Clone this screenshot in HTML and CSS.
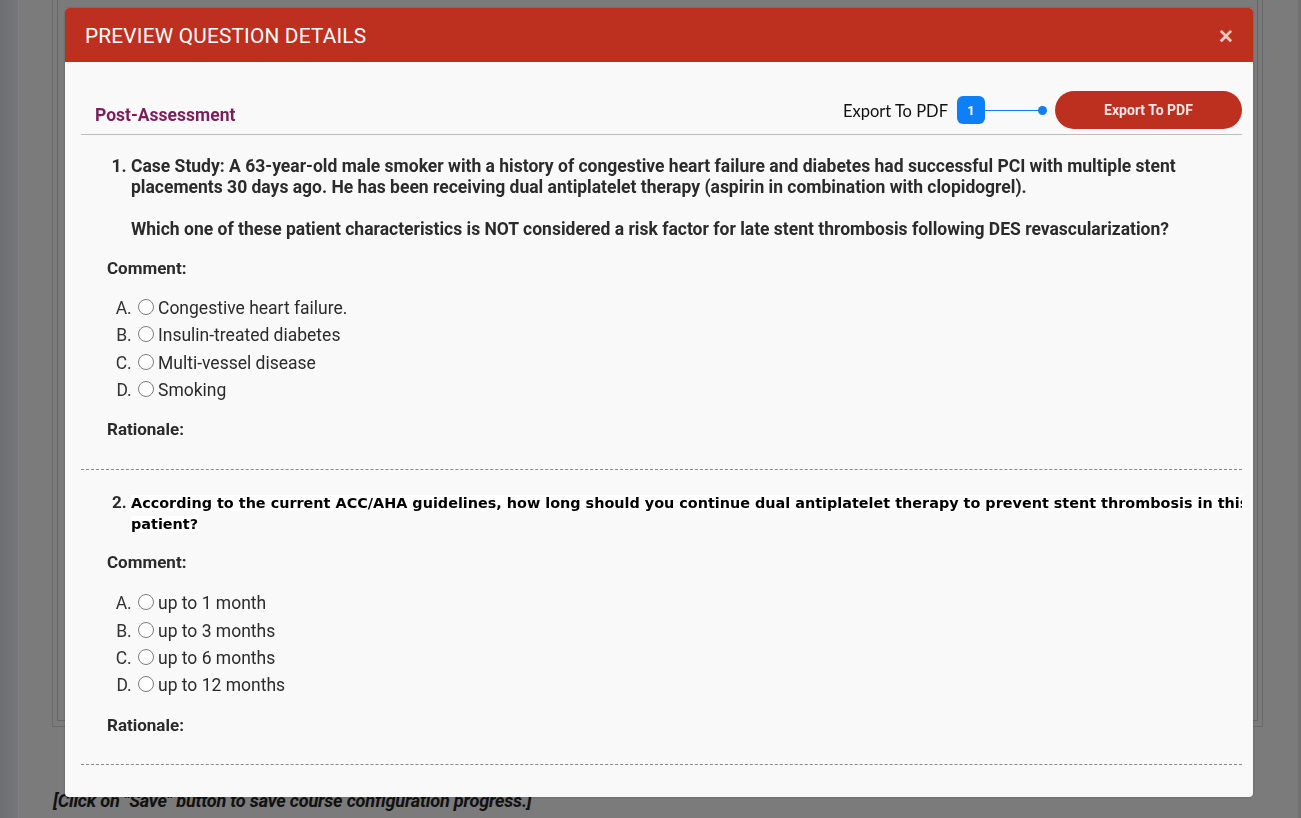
FILE: index.html
```html
<!DOCTYPE html>
<html>
<head>
<meta charset="utf-8">
<link rel="stylesheet" href="styles.css">
</head>
<body>
<div class="page">
  <div class="side"></div>
  <div class="main">
    <div class="outer-panel">
      <div class="inner-panel"></div>
    </div>
    <p class="save-note">[Click on "Save" button to save course configuration progress.]</p>
  </div>
  <div class="right-edge"></div>
</div>

<div class="modal">
  <div class="modal-header">
    <h2 class="modal-title">PREVIEW QUESTION DETAILS</h2>
    <span class="modal-close">&#x2715;</span>
  </div>
  <div class="modal-body">
    <div class="toolbar">
      <div class="section-title">Post-Assessment</div>
      <div class="export-wrap">
        <span class="export-label">Export To PDF</span>
        <span class="badge">1</span>
        <span class="connector"><span class="dot"></span></span>
        <button class="btn-export">Export To PDF</button>
      </div>
    </div>

    <div class="question">
      <ol class="q-list" start="1">
        <li class="q-text">Case Study: A 63-year-old male smoker with a history of congestive heart failure and diabetes had successful PCI with multiple stent placements 30 days ago. He has been receiving dual antiplatelet therapy (aspirin in combination with clopidogrel).<br><br>Which one of these patient characteristics is NOT considered a risk factor for late stent thrombosis following DES revascularization?</li>
      </ol>
      <div class="label">Comment:</div>
      <ol class="opts">
        <li><span class="radio"></span>Congestive heart failure.</li>
        <li><span class="radio"></span>Insulin-treated diabetes</li>
        <li><span class="radio"></span>Multi-vessel disease</li>
        <li><span class="radio"></span>Smoking</li>
      </ol>
      <div class="label rationale">Rationale:</div>
    </div>

    <div class="question second">
      <ol class="q-list" start="2">
        <li class="q-text q-alt"><span class="hl">According to the current ACC/AHA guidelines, how long should you continue dual antiplatelet therapy to prevent stent thrombosis in this patient?</span></li>
      </ol>
      <div class="label">Comment:</div>
      <ol class="opts">
        <li><span class="radio"></span>up to 1 month</li>
        <li><span class="radio"></span>up to 3 months</li>
        <li><span class="radio"></span>up to 6 months</li>
        <li><span class="radio"></span>up to 12 months</li>
      </ol>
      <div class="label rationale">Rationale:</div>
    </div>
  </div>
</div>
</body>
</html>
```

FILE: styles.css
```css
html, body {
  margin: 0;
  padding: 0;
  height: 100%;
  overflow: hidden;
}
body {
  font-family: Roboto, "Liberation Sans", sans-serif;
  background: #7b7b7b;
}
.page {
  display: flex;
  height: 818px;
}
.side {
  width: 18px;
  background: linear-gradient(to right, #6c6e70, #76777a);
  border-right: 1px solid #808080;
}
.main {
  flex: 1;
  padding-left: 33px;
  display: flex;
  flex-direction: column;
}
.outer-panel {
  width: 1211px;
  height: 727px;
  border: 1px solid #6a6a6a;
  border-top: none;
  box-sizing: border-box;
  padding: 0 4px 5px 4px;
  display: flex;
}
.inner-panel {
  flex: 1;
  border: 1px solid #666;
  border-top: none;
}
.save-note {
  margin: 63px 0 0 1px;
  font-family: Roboto, "Liberation Sans", sans-serif;
  font-weight: bold;
  font-style: italic;
  font-size: 18.1px;
  color: #111;
  letter-spacing: -0.2px;
}
.right-edge {
  width: 3px;
  background: #717171;
}

.modal {
  position: fixed;
  left: 65px;
  top: 8px;
  width: 1188px;
  height: 789px;
  background: #f9f9f9;
  border-radius: 4px;
  overflow: hidden;
  box-shadow: 0 0 2px rgba(0,0,0,0.3);
  display: flex;
  flex-direction: column;
}
.modal-header {
  background: #bd2f1e;
  height: 54px;
  display: flex;
  align-items: center;
  justify-content: space-between;
  padding: 0 19px 0 20px;
  flex-shrink: 0;
}
.modal-title {
  margin: 0;
  margin-top: 2px;
  color: #fff;
  font-weight: normal;
  font-size: 20.8px;
  letter-spacing: 0.2px;
}
.modal-close {
  color: #f0c9c3;
  font-size: 19px;
  font-weight: bold;
  margin-top: 3px;
}
.modal-body {
  padding: 29px 11px 0 16px;
  overflow: hidden;
}
.toolbar {
  display: flex;
  justify-content: space-between;
  align-items: flex-end;
  border-bottom: 1px solid #bdbdbd;
  padding-bottom: 5px;
}
.section-title {
  color: #7b1f5c;
  font-weight: bold;
  font-size: 17.5px;
  padding-left: 14px;
  padding-bottom: 4px;
}
.export-wrap {
  display: flex;
  align-items: center;
}
.export-label {
  font-family: Lato, Roboto, sans-serif;
  font-size: 16.5px;
  color: #111;
  margin-right: 9px;
  margin-top: 2px;
}
.badge {
  width: 28px;
  height: 28px;
  border-radius: 6px;
  background: #0d80f8;
  color: #fff;
  font-weight: bold;
  font-size: 13px;
  display: flex;
  align-items: center;
  justify-content: center;
}
.connector {
  width: 58px;
  height: 1px;
  background: #0d80f8;
  position: relative;
  margin-right: 12px;
}
.dot {
  position: absolute;
  right: -4px;
  top: -4px;
  width: 9px;
  height: 9px;
  border-radius: 50%;
  background: #0d80f8;
}
.btn-export {
  width: 187px;
  height: 38px;
  border: none;
  border-radius: 19px;
  background: #bd2f1e;
  color: #f3e6e3;
  font-family: Roboto, sans-serif;
  font-weight: bold;
  font-size: 14px;
  padding: 0;
}

.question {
  border-bottom: 1px dashed #8a8a8a;
  padding-bottom: 29px;
  overflow: hidden;
}
.question.second {
  padding-bottom: 28px;
}
.q-list {
  margin: 21px 0 0 0;
  padding-left: 50px;
}
.q-text {
  font-weight: bold;
  font-size: 17.5px;
  line-height: 21px;
  color: #2b2b2b;
  padding-right: 40px;
}
.q-list li::marker {
  font-weight: bold;
}
.second .q-list {
  margin-top: 22px;
}
.q-alt {
  font-family: "DejaVu Sans", Verdana, sans-serif;
  font-size: 14.4px;
  line-height: 21px;
  color: #000;
  padding-right: 0;
  margin-right: -20px;
}
.q-alt::marker {
  font-family: Roboto, sans-serif;
  font-size: 17px;
  color: #2b2b2b;
}
.hl {
  background: #fff;
}
.label {
  font-weight: bold;
  font-size: 17px;
  color: #2b2b2b;
  padding-left: 26px;
  margin-top: 19px;
  line-height: 21px;
}
.question:first-child .label,
.toolbar + .question > .label {
  margin-top: 18px;
}
.second .label {
  margin-top: 17px;
}
.opts {
  list-style-type: upper-alpha;
  margin: 19px 0 0 0;
  padding-left: 55px;
  font-size: 17.5px;
  color: #2b2b2b;
}
.second .opts {
  margin-top: 20px;
}
.opts li {
  height: 27.35px;
  line-height: 21px;
}
.opts li::marker {
  color: #333;
}
.radio {
  display: inline-block;
  border: 1px solid #7a7a7a;
  border-radius: 50%;
  background: #fff;
  margin: 0 4px 0 2px;
  vertical-align: -1px;
  box-sizing: border-box;
  width: 16px;
  height: 16px;
}
.toolbar + .question > .label.rationale,
.second .label.rationale,
.label.rationale {
  margin-top: 12px;
}
```
